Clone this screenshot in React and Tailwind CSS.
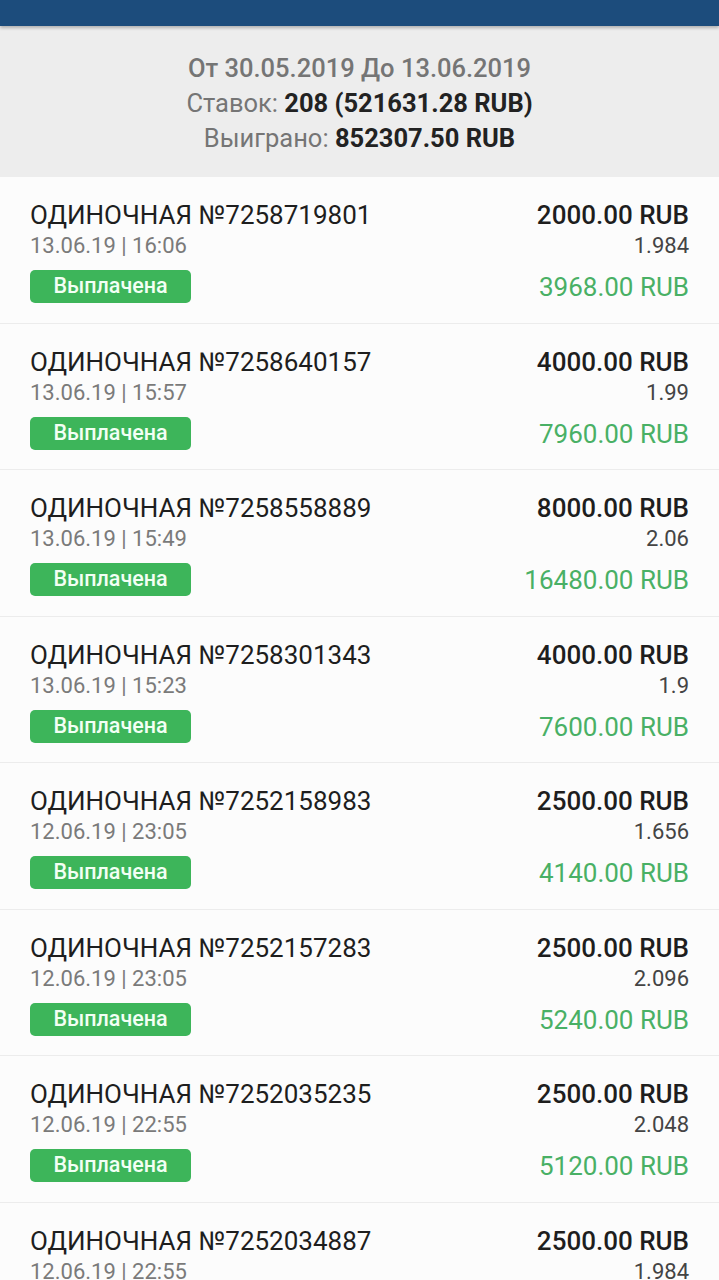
import React from "react";

const bets = [
  { id: "7258719801", date: "13.06.19 | 16:06", amount: "2000.00 RUB", odds: "1.984", win: "3968.00 RUB" },
  { id: "7258640157", date: "13.06.19 | 15:57", amount: "4000.00 RUB", odds: "1.99", win: "7960.00 RUB" },
  { id: "7258558889", date: "13.06.19 | 15:49", amount: "8000.00 RUB", odds: "2.06", win: "16480.00 RUB" },
  { id: "7258301343", date: "13.06.19 | 15:23", amount: "4000.00 RUB", odds: "1.9", win: "7600.00 RUB" },
  { id: "7252158983", date: "12.06.19 | 23:05", amount: "2500.00 RUB", odds: "1.656", win: "4140.00 RUB" },
  { id: "7252157283", date: "12.06.19 | 23:05", amount: "2500.00 RUB", odds: "2.096", win: "5240.00 RUB" },
  { id: "7252035235", date: "12.06.19 | 22:55", amount: "2500.00 RUB", odds: "2.048", win: "5120.00 RUB" },
  { id: "7252034887", date: "12.06.19 | 22:55", amount: "2500.00 RUB", odds: "1.984", win: "5120.00 RUB" },
];

export default function App() {
  return (
    <div className="w-[719px] h-[1280px] overflow-hidden bg-[#fcfcfc]" style={{ fontFamily: "Roboto, 'Noto Sans', sans-serif" }}>
      <div className="h-[26px] bg-[#1c4c7c] shadow-[0_2px_3px_rgba(0,0,0,0.25)] relative z-10" />
      <div className="h-[151px] bg-[#ededed] flex flex-col items-center pt-[25px] text-[25.5px] leading-[35px] text-[#757575]">
        <div className="font-medium">От 30.05.2019 До 13.06.2019</div>
        <div>
          Ставок: <span className="font-bold text-[#222]">208 (521631.28 RUB)</span>
        </div>
        <div>
          Выиграно: <span className="font-bold text-[#222]">852307.50 RUB</span>
        </div>
      </div>
      {bets.map((b) => (
        <div key={b.id} className="h-[146.5px] border-b border-[#ececec] flex justify-between pl-[30px] pr-[30px] pt-[22px] bg-[#fcfcfc]">
          <div className="flex flex-col">
            <div className="text-[26px] leading-[32px] text-[#1e1e1e]">ОДИНОЧНАЯ №{b.id}</div>
            <div className="text-[22px] leading-[30px] text-[#7a7a7a]">{b.date}</div>
            <div className="mt-[9px] w-[161px] h-[33px] rounded-[5px] bg-[#3db55a] text-[#f2fff4] text-[21.5px] font-medium flex items-center justify-center">
              Выплачена
            </div>
          </div>
          <div className="flex flex-col items-end">
            <div className="text-[26px] leading-[32px] font-medium text-[#1e1e1e]">{b.amount}</div>
            <div className="text-[22px] leading-[30px] text-[#444]">{b.odds}</div>
            <div className="text-[26px] leading-[40px] mt-[6px] text-[#49b065]">{b.win}</div>
          </div>
        </div>
      ))}
    </div>
  );
}
